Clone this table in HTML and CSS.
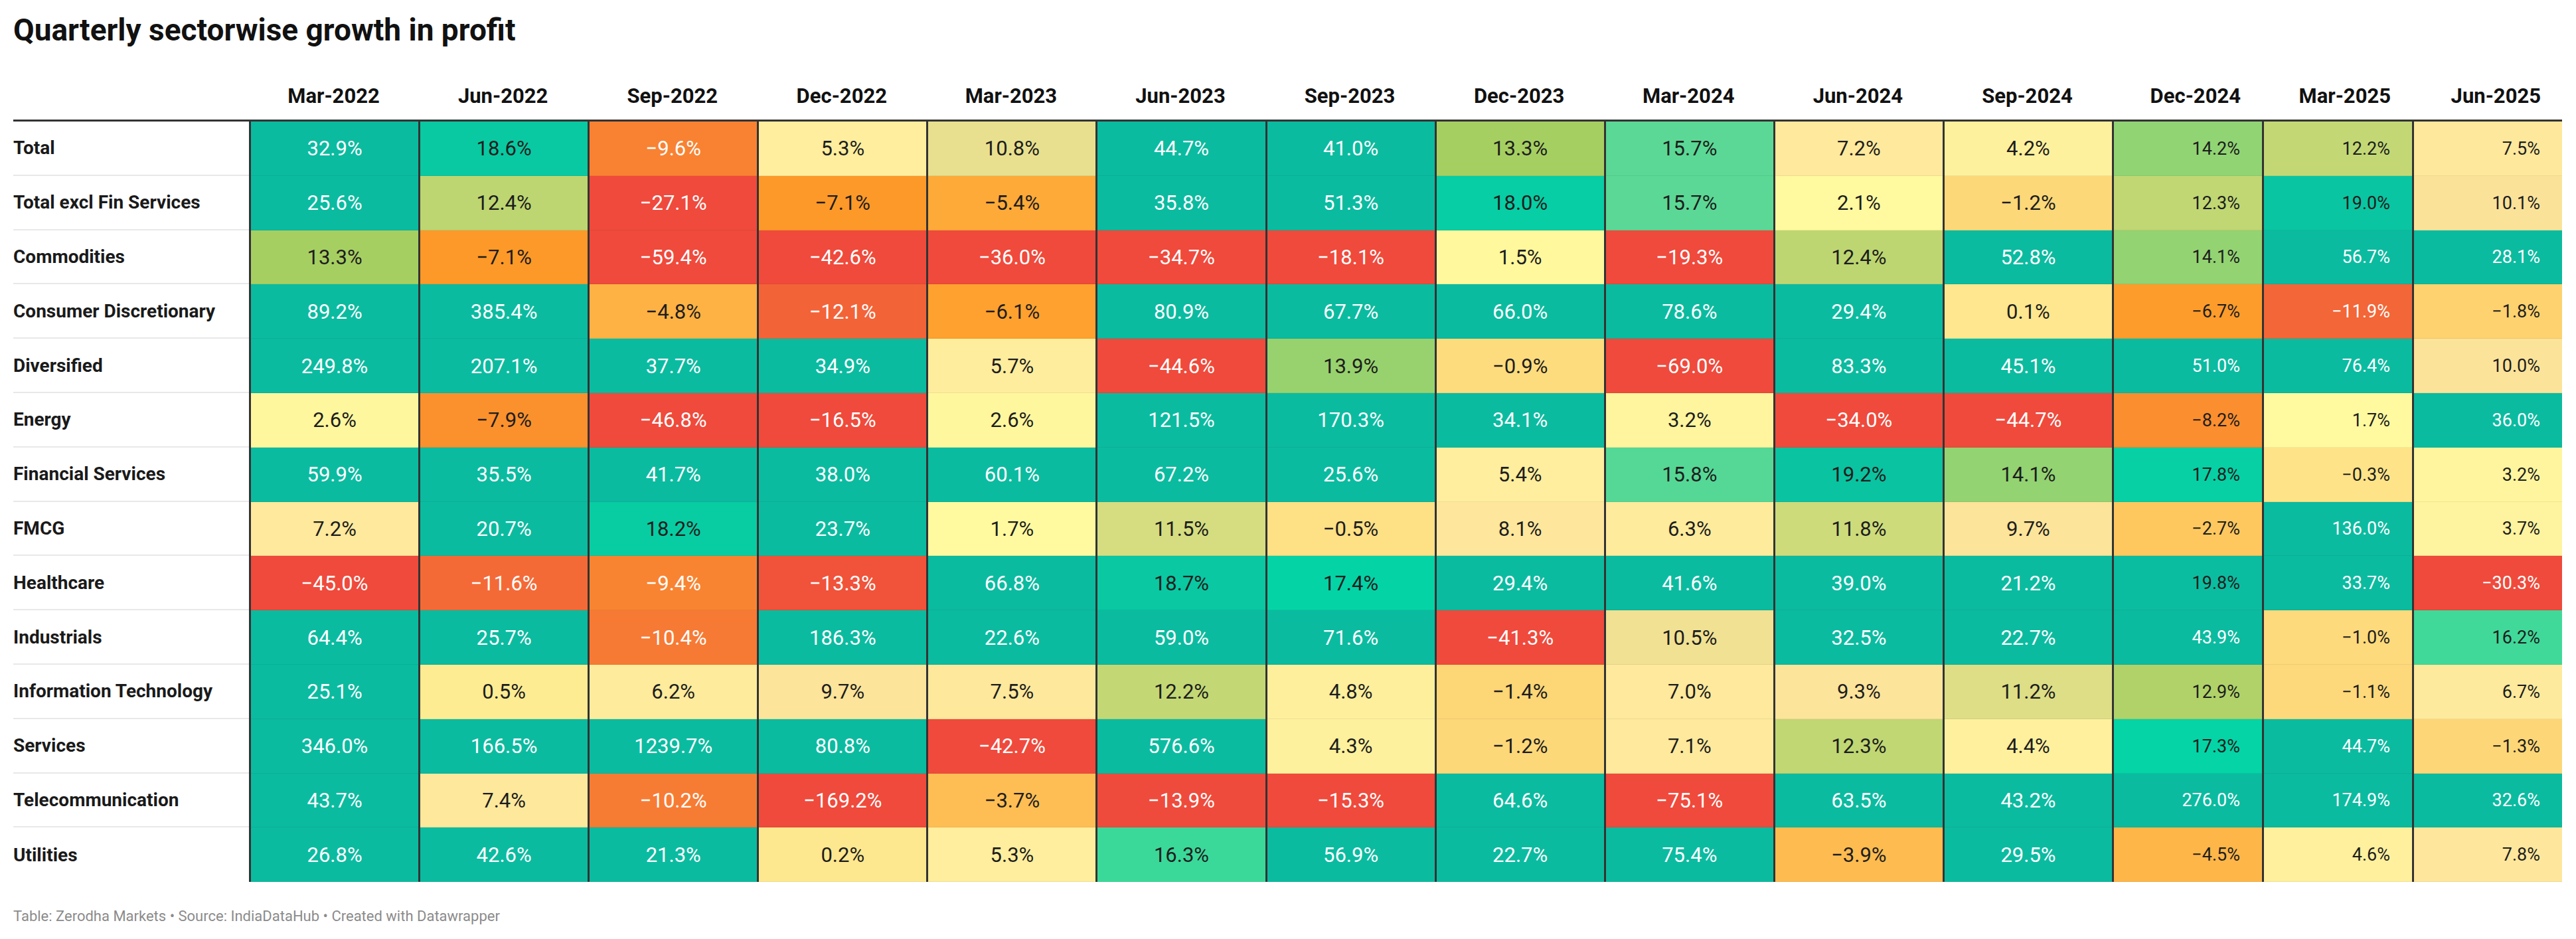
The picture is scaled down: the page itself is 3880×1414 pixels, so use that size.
FILE: index.html
```html
<!DOCTYPE html>
<html lang="en">
<head>
<meta charset="utf-8">
<title>Quarterly sectorwise growth in profit</title>
<link rel="stylesheet" href="styles.css">
</head>
<body>
<div class="chart">
  <h1 class="title">Quarterly sectorwise growth in profit</h1>
  <div class="table">
    <div class="row head">
      <div class="lab"></div>
      <div class="h">Mar-2022</div><div class="h">Jun-2022</div><div class="h">Sep-2022</div><div class="h">Dec-2022</div>
      <div class="h">Mar-2023</div><div class="h">Jun-2023</div><div class="h">Sep-2023</div><div class="h">Dec-2023</div>
      <div class="h">Mar-2024</div><div class="h">Jun-2024</div><div class="h">Sep-2024</div><div class="h">Dec-2024</div>
      <div class="h">Mar-2025</div><div class="h">Jun-2025</div>
    </div>
    <div class="row"><div class="lab">Total</div><div class="c">32.9%</div><div class="c">18.6%</div><div class="c">−9.6%</div><div class="c">5.3%</div><div class="c">10.8%</div><div class="c">44.7%</div><div class="c">41.0%</div><div class="c">13.3%</div><div class="c">15.7%</div><div class="c">7.2%</div><div class="c">4.2%</div><div class="c">14.2%</div><div class="c">12.2%</div><div class="c">7.5%</div></div>
    <div class="row"><div class="lab">Total excl Fin Services</div><div class="c">25.6%</div><div class="c">12.4%</div><div class="c">−27.1%</div><div class="c">−7.1%</div><div class="c">−5.4%</div><div class="c">35.8%</div><div class="c">51.3%</div><div class="c">18.0%</div><div class="c">15.7%</div><div class="c">2.1%</div><div class="c">−1.2%</div><div class="c">12.3%</div><div class="c">19.0%</div><div class="c">10.1%</div></div>
    <div class="row"><div class="lab">Commodities</div><div class="c">13.3%</div><div class="c">−7.1%</div><div class="c">−59.4%</div><div class="c">−42.6%</div><div class="c">−36.0%</div><div class="c">−34.7%</div><div class="c">−18.1%</div><div class="c">1.5%</div><div class="c">−19.3%</div><div class="c">12.4%</div><div class="c">52.8%</div><div class="c">14.1%</div><div class="c">56.7%</div><div class="c">28.1%</div></div>
    <div class="row"><div class="lab">Consumer Discretionary</div><div class="c">89.2%</div><div class="c">385.4%</div><div class="c">−4.8%</div><div class="c">−12.1%</div><div class="c">−6.1%</div><div class="c">80.9%</div><div class="c">67.7%</div><div class="c">66.0%</div><div class="c">78.6%</div><div class="c">29.4%</div><div class="c">0.1%</div><div class="c">−6.7%</div><div class="c">−11.9%</div><div class="c">−1.8%</div></div>
    <div class="row"><div class="lab">Diversified</div><div class="c">249.8%</div><div class="c">207.1%</div><div class="c">37.7%</div><div class="c">34.9%</div><div class="c">5.7%</div><div class="c">−44.6%</div><div class="c">13.9%</div><div class="c">−0.9%</div><div class="c">−69.0%</div><div class="c">83.3%</div><div class="c">45.1%</div><div class="c">51.0%</div><div class="c">76.4%</div><div class="c">10.0%</div></div>
    <div class="row"><div class="lab">Energy</div><div class="c">2.6%</div><div class="c">−7.9%</div><div class="c">−46.8%</div><div class="c">−16.5%</div><div class="c">2.6%</div><div class="c">121.5%</div><div class="c">170.3%</div><div class="c">34.1%</div><div class="c">3.2%</div><div class="c">−34.0%</div><div class="c">−44.7%</div><div class="c">−8.2%</div><div class="c">1.7%</div><div class="c">36.0%</div></div>
    <div class="row"><div class="lab">Financial Services</div><div class="c">59.9%</div><div class="c">35.5%</div><div class="c">41.7%</div><div class="c">38.0%</div><div class="c">60.1%</div><div class="c">67.2%</div><div class="c">25.6%</div><div class="c">5.4%</div><div class="c">15.8%</div><div class="c">19.2%</div><div class="c">14.1%</div><div class="c">17.8%</div><div class="c">−0.3%</div><div class="c">3.2%</div></div>
    <div class="row"><div class="lab">FMCG</div><div class="c">7.2%</div><div class="c">20.7%</div><div class="c">18.2%</div><div class="c">23.7%</div><div class="c">1.7%</div><div class="c">11.5%</div><div class="c">−0.5%</div><div class="c">8.1%</div><div class="c">6.3%</div><div class="c">11.8%</div><div class="c">9.7%</div><div class="c">−2.7%</div><div class="c">136.0%</div><div class="c">3.7%</div></div>
    <div class="row"><div class="lab">Healthcare</div><div class="c">−45.0%</div><div class="c">−11.6%</div><div class="c">−9.4%</div><div class="c">−13.3%</div><div class="c">66.8%</div><div class="c">18.7%</div><div class="c">17.4%</div><div class="c">29.4%</div><div class="c">41.6%</div><div class="c">39.0%</div><div class="c">21.2%</div><div class="c">19.8%</div><div class="c">33.7%</div><div class="c">−30.3%</div></div>
    <div class="row"><div class="lab">Industrials</div><div class="c">64.4%</div><div class="c">25.7%</div><div class="c">−10.4%</div><div class="c">186.3%</div><div class="c">22.6%</div><div class="c">59.0%</div><div class="c">71.6%</div><div class="c">−41.3%</div><div class="c">10.5%</div><div class="c">32.5%</div><div class="c">22.7%</div><div class="c">43.9%</div><div class="c">−1.0%</div><div class="c">16.2%</div></div>
    <div class="row"><div class="lab">Information Technology</div><div class="c">25.1%</div><div class="c">0.5%</div><div class="c">6.2%</div><div class="c">9.7%</div><div class="c">7.5%</div><div class="c">12.2%</div><div class="c">4.8%</div><div class="c">−1.4%</div><div class="c">7.0%</div><div class="c">9.3%</div><div class="c">11.2%</div><div class="c">12.9%</div><div class="c">−1.1%</div><div class="c">6.7%</div></div>
    <div class="row"><div class="lab">Services</div><div class="c">346.0%</div><div class="c">166.5%</div><div class="c">1239.7%</div><div class="c">80.8%</div><div class="c">−42.7%</div><div class="c">576.6%</div><div class="c">4.3%</div><div class="c">−1.2%</div><div class="c">7.1%</div><div class="c">12.3%</div><div class="c">4.4%</div><div class="c">17.3%</div><div class="c">44.7%</div><div class="c">−1.3%</div></div>
    <div class="row"><div class="lab">Telecommunication</div><div class="c">43.7%</div><div class="c">7.4%</div><div class="c">−10.2%</div><div class="c">−169.2%</div><div class="c">−3.7%</div><div class="c">−13.9%</div><div class="c">−15.3%</div><div class="c">64.6%</div><div class="c">−75.1%</div><div class="c">63.5%</div><div class="c">43.2%</div><div class="c">276.0%</div><div class="c">174.9%</div><div class="c">32.6%</div></div>
    <div class="row"><div class="lab">Utilities</div><div class="c">26.8%</div><div class="c">42.6%</div><div class="c">21.3%</div><div class="c">0.2%</div><div class="c">5.3%</div><div class="c">16.3%</div><div class="c">56.9%</div><div class="c">22.7%</div><div class="c">75.4%</div><div class="c">−3.9%</div><div class="c">29.5%</div><div class="c">−4.5%</div><div class="c">4.6%</div><div class="c">7.8%</div></div>
  </div>
  <div class="foot">Table: Zerodha Markets • Source: IndiaDataHub • Created with Datawrapper</div>
</div>
<script src="script.js"></script>
</body>
</html>
```

FILE: styles.css
```css
html, body {
  margin: 0;
  padding: 0;
  background: #ffffff;
}

body {
  font-family: Roboto, "Noto Sans", "Liberation Sans", sans-serif;
  color: #1d1d1d;
}

.chart {
  padding: 18px 21px 0 20px;
}

.title {
  margin: 0;
  font-size: 46px;
  line-height: 55px;
  font-weight: 700;
  color: #111111;
}

.table {
  margin-top: 53px;
}

.row {
  display: grid;
  grid-template-columns: 355px repeat(11, minmax(0, 1fr)) repeat(3, 226px);
  height: 81.8px;
}

.row.head {
  height: auto;
  padding-bottom: 17px;
  border-bottom: 3px solid #333333;
}

.h {
  font-size: 31px;
  line-height: 37px;
  font-weight: 700;
  color: #111111;
  text-align: center;
}

.head .h:nth-child(n+13) {
  text-align: right;
  padding-right: 32px;
}

.lab {
  display: flex;
  align-items: center;
  font-size: 28px;
  font-weight: 700;
  color: #1a1a1a;
  box-sizing: border-box;
  border-bottom: 2px solid #e8e8e8;
}

.head .lab {
  border-bottom: 0;
}

.row:last-child .lab {
  border-bottom: 0;
}

.c {
  display: flex;
  align-items: center;
  justify-content: center;
  box-sizing: border-box;
  border-left: 3px solid #333333;
  font-size: 31px;
  color: #1d1d1d;
  background: #0bbba0;
  box-shadow: inset 0 -1px 0 rgba(0, 0, 0, 0.06);
}

.row .c:nth-child(n+13) {
  justify-content: flex-end;
  padding-right: 33px;
  font-size: 27px;
}

.c.w {
  color: #ffffff;
}

.foot {
  margin-top: 39px;
  font-size: 22px;
  line-height: 26px;
  color: #8b8b8b;
}
```

FILE: script.js
```javascript
(function () {
  var stops = [
    [-14, '#ef4a3c'],
    [-10, '#f77f33'],
    [-8, '#fb902d'],
    [-7, '#fd9a29'],
    [-6, '#fea22e'],
    [-4.5, '#feb649'],
    [-2.7, '#fec85f'],
    [-1.2, '#fdd879'],
    [0, '#fee68d'],
    [1.7, '#fffa9f'],
    [4.5, '#fef09d'],
    [7.5, '#fee89c'],
    [10, '#fce39a'],
    [10.8, '#e8e08e'],
    [11.5, '#d5dd80'],
    [12.3, '#c0d773'],
    [13.3, '#a6cf62'],
    [14.2, '#91d474'],
    [15.7, '#5bd895'],
    [16.3, '#3ad99a'],
    [17.3, '#04d4a6'],
    [18.5, '#09caa2'],
    [20, '#0bbba0']
  ];

  function rgb(h) {
    return [parseInt(h.substr(1, 2), 16), parseInt(h.substr(3, 2), 16), parseInt(h.substr(5, 2), 16)];
  }

  function colour(v) {
    if (v <= stops[0][0]) return stops[0][1];
    for (var i = 1; i < stops.length; i++) {
      if (v <= stops[i][0]) {
        var a = rgb(stops[i - 1][1]);
        var b = rgb(stops[i][1]);
        var t = (v - stops[i - 1][0]) / (stops[i][0] - stops[i - 1][0]);
        var r = [0, 1, 2].map(function (k) { return Math.round(a[k] + (b[k] - a[k]) * t); });
        return 'rgb(' + r.join(',') + ')';
      }
    }
    return stops[stops.length - 1][1];
  }

  var cells = document.querySelectorAll('.c');
  for (var i = 0; i < cells.length; i++) {
    var el = cells[i];
    var v = parseFloat(el.textContent.replace('\u2212', '-'));
    el.style.backgroundColor = colour(v);
    if (v <= -9 || v >= 19.9) el.classList.add('w');
  }
})();
```
